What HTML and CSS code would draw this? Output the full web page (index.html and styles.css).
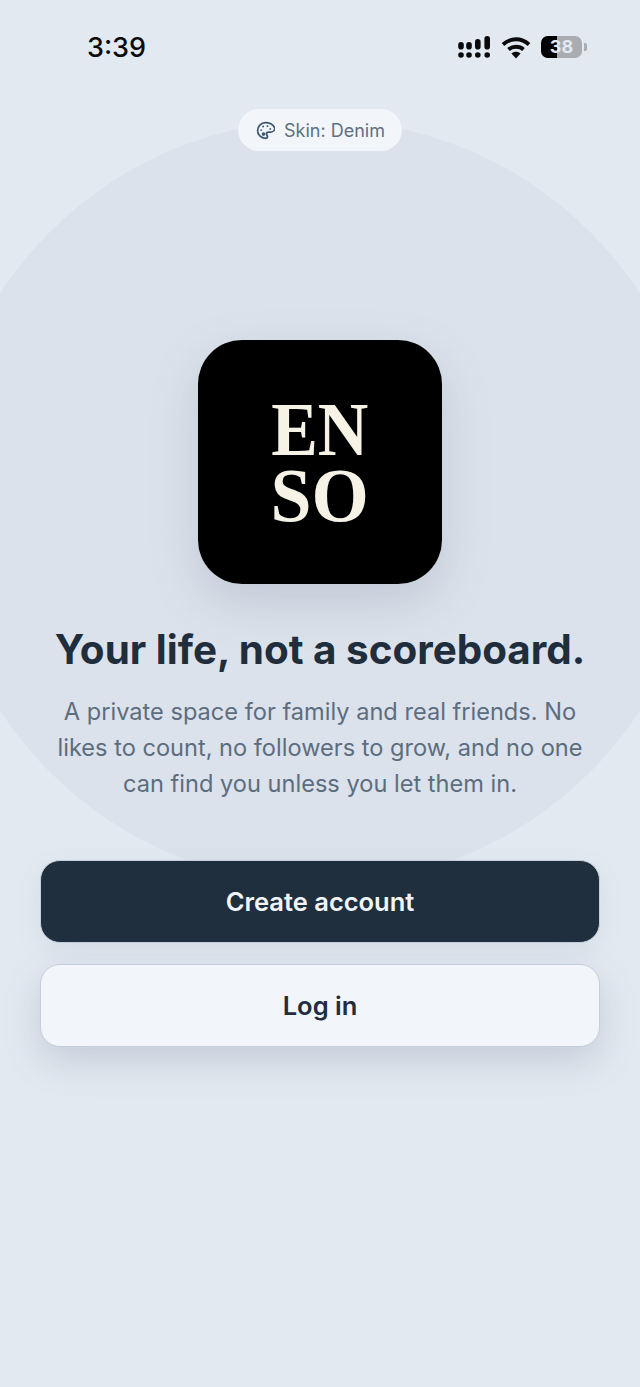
FILE: index.html
```html
<!DOCTYPE html>
<html lang="en">
<head>
    <meta charset="UTF-8">
    <meta name="viewport" content="width=device-width, initial-scale=1.0">
    <title>Enso</title>
    <link rel="stylesheet" href="styles.css">
</head>
<body>
    <div class="screen">
        <div class="halo"></div>
        <div class="status-bar">
            <span class="clock">3:39</span>
            <div class="status-icons">
                <svg class="signal" width="34" height="24" viewBox="0 0 34 24" fill="#0b0b0d">
                    <rect x="1.200" y="7" width="5.600" height="7.500" rx="2.800"/>
                    <rect x="9.200" y="7" width="5.600" height="7.500" rx="2.800"/>
                    <rect x="18" y="4" width="5.600" height="10.500" rx="2.800"/>
                    <rect x="27.400" y="1" width="5.600" height="13.500" rx="2.800"/>
                    <circle cx="4" cy="20" r="2.800"/>
                    <circle cx="12" cy="20" r="2.800"/>
                    <circle cx="20.800" cy="20" r="2.800"/>
                    <circle cx="30.200" cy="20" r="2.800"/>
                </svg>
                <svg class="wifi" width="30" height="24" viewBox="0 0 30 24" fill="none" stroke="#0b0b0d" stroke-width="3.800">
                    <path d="M2 9.500C9.500 2.500 20.500 2.500 28 9.500"/>
                    <path d="M7.500 14.500C11.500 10.800 18.500 10.800 22.500 14.500"/>
                    <path d="M15 23.500l-4.600-5C13 16.200 17 16.200 19.600 18.500z" fill="#0b0b0d" stroke="none"/>
                </svg>
                <div class="battery">
                    <div class="battery-body">
                        <div class="battery-fill"></div>
                        <span class="battery-text">38</span>
                    </div>
                    <div class="battery-cap"></div>
                </div>
            </div>
        </div>

        <div class="skin-row">
            <div class="skin-pill">
                <svg width="19" height="19" viewBox="0 0 24 24" fill="none" stroke="#3b5670" stroke-width="2.200" stroke-linecap="round" stroke-linejoin="round">
                    <path d="M12 2.200C6.400 2.200 2 6.600 2 12s4.400 9.800 10 9.800c1.600 0 2.500-1 2.500-2.300 0-.7-.3-1.200-.7-1.700-.4-.5-.6-1-.6-1.600 0-1.300 1-2.200 2.400-2.200h2.600c3 0 5.600-2.100 5.600-5C21.800 4.900 17.400 2.200 12 2.200z"/>
                    <circle cx="6.500" cy="11.500" r="1.200" fill="#3b5670" stroke="none"/>
                    <circle cx="9" cy="7" r="1.200" fill="#3b5670" stroke="none"/>
                    <circle cx="14.500" cy="6.500" r="1.200" fill="#3b5670" stroke="none"/>
                    <circle cx="18" cy="10" r="1.200" fill="#3b5670" stroke="none"/>
                    <circle cx="9.500" cy="16.500" r="2.300" fill="#3b5670" stroke="none"/>
                </svg>
                <span>Skin: Denim</span>
            </div>
        </div>

        <div class="logo">
            <span class="logo-line">EN</span>
            <span class="logo-line logo-line-wide">SO</span>
        </div>

        <h1 class="title">Your life, not a scoreboard.</h1>
        <p class="intro">A private space for family and real friends. No likes to count, no followers to grow, and no one can find you unless you let them in.</p>

        <div class="actions">
            <button class="btn btn-dark">Create account</button>
            <button class="btn btn-light">Log in</button>
        </div>
    </div>
</body>
</html>
```

FILE: styles.css
```css
* {
    box-sizing: border-box;
}
html, body {
    margin: 0;
    padding: 0;
}
body {
    font-family: Inter, "Liberation Sans", sans-serif;
    background-color: #e2e9f1;
}
.screen {
    position: relative;
    width: 640px;
    height: 1387px;
    overflow: hidden;
    background-color: #e2e9f1;
}
.halo {
    position: absolute;
    left: -62px;
    top: 120px;
    width: 764px;
    height: 764px;
    border-radius: 50%;
    background-color: #dbe2eb;
}
.status-bar {
    position: relative;
    display: flex;
    justify-content: space-between;
    align-items: center;
    height: 94px;
    padding: 0 53px 0 87px;
}
.clock {
    font-size: 27px;
    font-weight: 500;
    color: #0b0b0d;
}
.status-icons {
    display: flex;
    align-items: center;
    gap: 10px;
}
.battery {
    display: flex;
    align-items: center;
    gap: 2px;
}
.battery-body {
    position: relative;
    width: 41px;
    height: 22px;
    border-radius: 7px;
    overflow: hidden;
    background-color: #a9acb0;
}
.battery-fill {
    width: 16px;
    height: 22px;
    background-color: #000;
}
.battery-text {
    position: absolute;
    inset: 0;
    text-align: center;
    font-size: 18px;
    font-weight: 700;
    line-height: 22px;
    color: #e2e9f1;
}
.battery-cap {
    width: 3px;
    height: 8px;
    border-radius: 0 2px 2px 0;
    background-color: #a9acb0;
}
.skin-row {
    position: relative;
    display: flex;
    justify-content: center;
    margin-top: 15px;
}
.skin-pill {
    display: flex;
    align-items: center;
    gap: 9px;
    height: 42px;
    padding: 0 17px 0 18px;
    border-radius: 21px;
    background-color: #f2f6fa;
    font-size: 18px;
    color: #5f6f80;
}
.logo {
    position: relative;
    display: flex;
    flex-direction: column;
    align-items: center;
    justify-content: center;
    width: 244px;
    height: 244px;
    margin: 189px auto 0;
    border-radius: 44px;
    background-color: #000;
    box-shadow: 0 18px 48px rgba(100, 116, 139, 0.22);
    font-family: "Liberation Serif", serif;
    font-size: 76px;
    font-weight: 700;
    line-height: 66px;
    color: #f6f2e6;
}
.logo-line {
    transform: scaleX(0.92);
}
.logo-line-wide {
    transform: scaleX(0.97);
}
.title {
    position: relative;
    margin: 41px 0 0;
    font-size: 40.400px;
    line-height: 50px;
    font-weight: 700;
    text-align: center;
    color: #1f2d3d;
}
.intro {
    position: relative;
    width: 560px;
    margin: 19px auto 0;
    font-size: 23.600px;
    line-height: 36px;
    text-align: center;
    color: #5d6d80;
}
.actions {
    position: relative;
    display: flex;
    flex-direction: column;
    gap: 21px;
    margin: 58px 40px 0;
}
.btn {
    height: 83px;
    border-radius: 20px;
    font-family: inherit;
    font-size: 25.500px;
    font-weight: 600;
    border: 1.500px solid #c5cfdc;
}
.btn-dark {
    background-color: #1f2f3e;
    color: #f1f5f9;
    box-shadow: 0 8px 24px rgba(100, 116, 139, 0.10);
}
.btn-light {
    background-color: #f2f6fa;
    color: #1f2d3d;
    box-shadow: 0 14px 36px rgba(100, 116, 139, 0.24);
}
```
